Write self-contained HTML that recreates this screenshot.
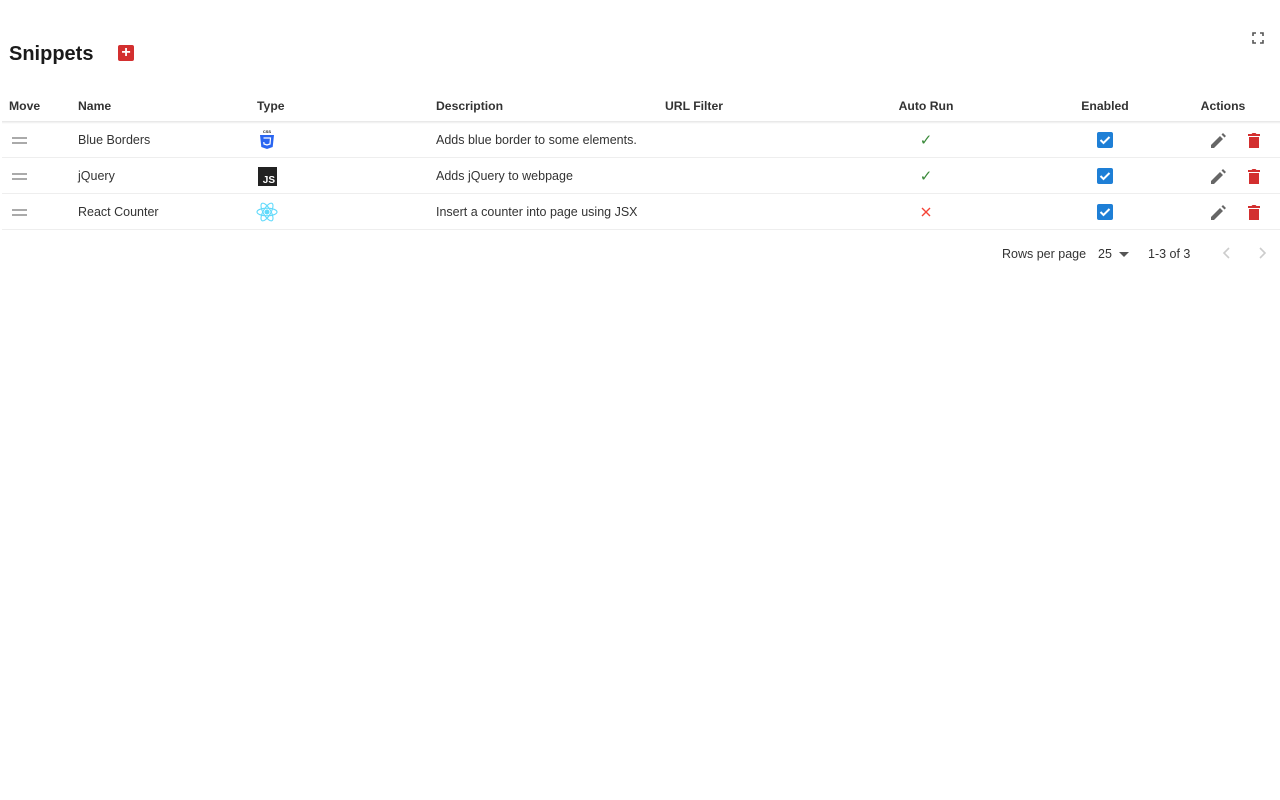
<!DOCTYPE html>
<html><head><meta charset="utf-8"><style>
body{margin:0;width:1280px;height:800px;background:#fff;font-family:"Liberation Sans",Arial,sans-serif;color:#222;position:relative;overflow:hidden}
.a{position:absolute}
h1{position:absolute;left:9px;top:43px;margin:0;font-size:20px;font-weight:bold;color:#1a1a1a}
.th{position:absolute;top:99px;font-size:12.2px;font-weight:bold;color:#333}
.td{position:absolute;font-size:12.5px;color:#333}
.line{position:absolute;left:2px;width:1278px;height:1px;background:#eee}
.mv{position:absolute;left:12px;width:15px;height:2px;background:#aaa}
.cb{position:absolute;left:1097px;width:16px;height:16px;background:#1e7fd6;border-radius:2px}
.c{text-align:center;transform:translateX(-50%)}
</style></head><body>
<h1>Snippets</h1>
<div class="a" style="left:118px;top:45px;width:16px;height:16px;background:#d32f2f;border-radius:2px;color:#fff;font-weight:bold;font-size:16px;line-height:16px;text-align:center">+</div>
<svg class="a" style="left:1252px;top:32px" width="12" height="12" viewBox="0 0 12 12" fill="none" stroke="#555" stroke-width="1.6"><path d="M1 4V1h3M8 1h3v3M11 8v3H8M4 11H1V8"/></svg>
<div class="th" style="left:9px">Move</div>
<div class="th" style="left:78px">Name</div>
<div class="th" style="left:257px">Type</div>
<div class="th" style="left:436px">Description</div>
<div class="th" style="left:665px">URL Filter</div>
<div class="th c" style="left:926px">Auto Run</div>
<div class="th c" style="left:1105px">Enabled</div>
<div class="th c" style="left:1223px">Actions</div>
<div class="a" style="left:2px;top:121px;width:1278px;height:3px;background:linear-gradient(#e4e4e4,#fff)"></div>
<div class="line" style="top:157px"></div><div class="line" style="top:193px"></div><div class="line" style="top:229px"></div>

<div class="mv" style="top:137px"></div><div class="mv" style="top:142px"></div>
<div class="mv" style="top:173px"></div><div class="mv" style="top:178px"></div>
<div class="mv" style="top:209px"></div><div class="mv" style="top:214px"></div>
<div class="td" style="left:78px;top:133px">Blue Borders</div>
<div class="td" style="left:78px;top:169px">jQuery</div>
<div class="td" style="left:78px;top:205px">React Counter</div>
<svg class="a" style="left:258px;top:129px" width="18" height="22" viewBox="0 0 18 22"><text x="9" y="4" font-size="4" text-anchor="middle" fill="#222" font-family="Liberation Sans" font-weight="bold">CSS</text><path d="M2 6h14l-1.3 12L9 20l-5.7-2z" fill="#2965f1"/><path d="M5.5 9h7l-.5 6-3 1-3-1-.2-2" fill="none" stroke="#fff" stroke-width="1.2"/></svg>
<div class="a" style="left:258px;top:167px;width:19px;height:19px;background:#222"><span class="a" style="right:2px;bottom:0;color:#fff;font-size:10px;font-weight:bold">JS</span></div>
<svg class="a" style="left:256px;top:201px" width="22" height="22" viewBox="-11 -11 22 22" fill="none" stroke="#61dafb" stroke-width="1.1"><ellipse rx="10" ry="3.8"/><ellipse rx="10" ry="3.8" transform="rotate(60)"/><ellipse rx="10" ry="3.8" transform="rotate(120)"/><circle r="2" fill="#61dafb"/></svg>
<div class="td" style="left:436px;top:133px">Adds blue border to some elements.</div>
<div class="td" style="left:436px;top:169px">Adds jQuery to webpage</div>
<div class="td" style="left:436px;top:205px">Insert a counter into page using JSX</div>
<div class="td c" style="left:926px;top:131px;color:#3a8a3a;font-size:15px">✓</div>
<div class="td c" style="left:926px;top:167px;color:#3a8a3a;font-size:15px">✓</div>
<svg class="a" style="left:921px;top:207px" width="10" height="10"><path d="M1 1l8 8M9 1l-8 8" stroke="#f44336" stroke-width="1.4"/></svg>
<div class="cb" style="top:132px"></div><div class="cb" style="top:168px"></div><div class="cb" style="top:204px"></div>
<svg class="a" style="left:1097px;top:132px" width="16" height="88"><g fill="none" stroke="#fff" stroke-width="2"><path d="M3.5 8l3 3 6-6"/><path d="M3.5 44l3 3 6-6"/><path d="M3.5 80l3 3 6-6"/></g></svg>
<svg class="a" style="left:1209px;top:130px" width="20" height="92" viewBox="0 0 20 92"><g fill="#666"><path d="M2 15v3h3l9-9-3-3zM15.5 7.5l1.5-1.5-3-3-1.5 1.5z"/><path d="M2 51v3h3l9-9-3-3zM15.5 43.5l1.5-1.5-3-3-1.5 1.5z"/><path d="M2 87v3h3l9-9-3-3zM15.5 79.5l1.5-1.5-3-3-1.5 1.5z"/></g></svg>
<svg class="a" style="left:1246px;top:131px" width="16" height="92" viewBox="0 0 16 92"><g fill="#d32f2f"><path d="M2 3h3.5l1-1h3l1 1H14v2H2zM3 6h10v11H3z"/><path d="M2 39h3.5l1-1h3l1 1H14v2H2zM3 42h10v11H3z"/><path d="M2 75h3.5l1-1h3l1 1H14v2H2zM3 78h10v11H3z"/></g></svg>
<div class="td" style="left:1002px;top:247px">Rows per page</div>
<div class="td" style="left:1098px;top:247px">25</div>
<svg class="a" style="left:1119px;top:252px" width="10" height="5"><path d="M0 0h10L5 5z" fill="#555"/></svg>
<div class="td" style="left:1148px;top:247px">1-3 of 3</div>
<svg class="a" style="left:1222px;top:247px" width="10" height="12"><path d="M7 1L2 6l5 5" fill="none" stroke="#ccc" stroke-width="1.6"/></svg>
<svg class="a" style="left:1257px;top:247px" width="10" height="12"><path d="M3 1l5 5-5 5" fill="none" stroke="#ccc" stroke-width="1.6"/></svg>
</body></html>
